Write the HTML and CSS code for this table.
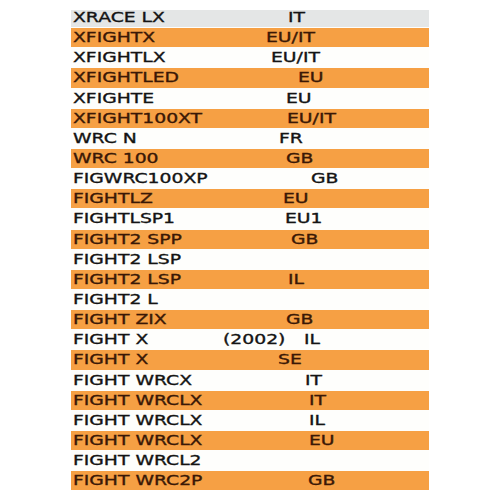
FILE: index.html
```html
<!DOCTYPE html>
<html>
<head>
<meta charset="utf-8">
<link rel="stylesheet" href="styles.css">
</head>
<body>
<div class="list">
  <div class="row first"><span class="name">XRACE LX</span><span class="code" style="margin-left:65px">IT</span></div>
  <div class="row alt"><span class="name">XFIGHTX</span><span class="code" style="margin-left:43px">EU/IT</span></div>
  <div class="row"><span class="name">XFIGHTLX</span><span class="code" style="margin-left:48px">EU/IT</span></div>
  <div class="row alt"><span class="name">XFIGHTLED</span><span class="code" style="margin-left:75px">EU</span></div>
  <div class="row"><span class="name">XFIGHTE</span><span class="code" style="margin-left:63px">EU</span></div>
  <div class="row alt"><span class="name">XFIGHT100XT</span><span class="code" style="margin-left:64px">EU/IT</span></div>
  <div class="row"><span class="name">WRC N</span><span class="code" style="margin-left:56px">FR</span></div>
  <div class="row alt"><span class="name">WRC 100</span><span class="code" style="margin-left:63px">GB</span></div>
  <div class="row"><span class="name">FIGWRC100XP</span><span class="code" style="margin-left:88px">GB</span></div>
  <div class="row alt"><span class="name">FIGHTLZ</span><span class="code" style="margin-left:60px">EU</span></div>
  <div class="row"><span class="name">FIGHTLSP1</span><span class="code" style="margin-left:62px">EU1</span></div>
  <div class="row alt"><span class="name">FIGHT2 SPP</span><span class="code" style="margin-left:68px">GB</span></div>
  <div class="row"><span class="name">FIGHT2 LSP</span></div>
  <div class="row alt"><span class="name">FIGHT2 LSP</span><span class="code" style="margin-left:65px">IL</span></div>
  <div class="row"><span class="name">FIGHT2 L</span></div>
  <div class="row alt"><span class="name">FIGHT ZIX</span><span class="code" style="margin-left:63px">GB</span></div>
  <div class="row"><span class="name">FIGHT X</span><span class="code" style="margin-left:0px">(2002)</span><span class="code" style="margin-left:34px">IL</span></div>
  <div class="row alt"><span class="name">FIGHT X</span><span class="code" style="margin-left:55px">SE</span></div>
  <div class="row"><span class="name">FIGHT WRCX</span><span class="code" style="margin-left:82px">IT</span></div>
  <div class="row alt"><span class="name">FIGHT WRCLX</span><span class="code" style="margin-left:86px">IT</span></div>
  <div class="row"><span class="name">FIGHT WRCLX</span><span class="code" style="margin-left:86px">IL</span></div>
  <div class="row alt"><span class="name">FIGHT WRCLX</span><span class="code" style="margin-left:86px">EU</span></div>
  <div class="row"><span class="name">FIGHT WRCL2</span></div>
  <div class="row alt"><span class="name">FIGHT WRC2P</span><span class="code" style="margin-left:85px">GB</span></div>
</div>
</body>
</html>
```

FILE: styles.css
```css
html, body {
  margin: 0;
  padding: 0;
  background: #ffffff;
}

.list {
  width: 358px;
  margin: 7px 0 0 71px;
  font-family: "DejaVu Sans", Verdana, sans-serif;
  font-size: 14px;
  color: #141414;
  -webkit-text-stroke: 0.35px currentColor;
}

.row {
  display: flex;
  align-items: baseline;
  box-sizing: border-box;
  height: 20.15px;
  line-height: 20.15px;
  padding-left: 2px;
  white-space: pre;
  background: #fefefc;
}

.row.first {
  background: #e4e6e6;
  border-top: 3px solid #ffffff;
  background-clip: padding-box;
  line-height: 14.15px;
}

.row.alt {
  background: #f6a044;
  border-top: 1px solid #fefefc;
  background-clip: padding-box;
  line-height: 18.15px;
  color: #3a1806;
}

.name {
  display: inline-block;
  width: 150px;
  flex: none;
}

.name, .code {
  transform: scaleX(1.34);
  transform-origin: 0 50%;
}

.code {
  display: inline-block;
  flex: none;
}
```
